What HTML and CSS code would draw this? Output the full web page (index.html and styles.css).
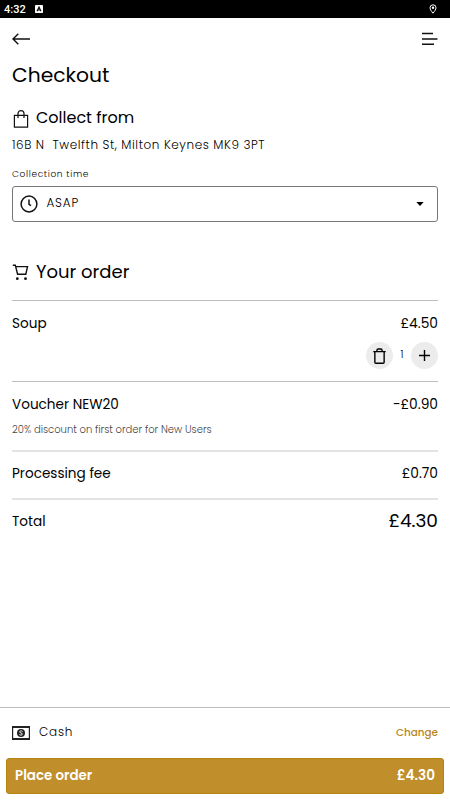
FILE: index.html
```html
<!DOCTYPE html>
<html lang="en">
<head>
<meta charset="utf-8">
<title>Checkout</title>
<link rel="stylesheet" href="styles.css">
</head>
<body>
<div class="statusbar">
  <span class="clock">4:32</span>
  <svg class="badge" width="8" height="8" viewBox="0 0 8 8"><rect width="8" height="8" rx=".7" fill="#fff"/><path d="M2 6.2 4 2 6 6.2M3 5h2" fill="none" stroke="#000" stroke-width="1.1"/></svg>
  <svg class="pin" width="8" height="10" viewBox="0 0 8 10" fill="none" stroke="#fff"><path d="M4 9.2C2.4 7.2 1 5.4 1 3.8a3 3 0 0 1 6 0C7 5.4 5.6 7.2 4 9.2Z"/><circle cx="4" cy="3.8" r="1.2" fill="#fff" stroke="none"/></svg>
</div>
<header class="nav">
  <svg width="18" height="12" viewBox="0 0 18 12" fill="none" stroke="#111" stroke-width="1.4"><path d="M18 6H1M6.3.8 1 6l5.3 5.2"/></svg>
  <svg width="16" height="14" viewBox="0 0 16 14" stroke="#111" stroke-width="1.5"><path d="M0 1.6h11M0 7h15.5M0 12.2h12"/></svg>
</header>
<main class="page">
  <h1 class="title">Checkout</h1>
  <h2 class="heading collect">
    <svg width="24" height="20" viewBox="0 0 24 20" fill="none" stroke="#111" stroke-width="1.2"><path d="M2.4 6.4h13.2v11.8H2.4zM6 9V4.6a3 3 0 0 1 6 0V9"/></svg>
    <span>Collect from</span>
  </h2>
  <p class="address">16B N&nbsp; Twelfth St, Milton Keynes MK9 3PT</p>
  <div class="label">Collection time</div>
  <div class="select">
    <svg width="18" height="18" viewBox="0 0 18 18" fill="none" stroke="#111" stroke-width="1.5"><circle cx="9" cy="9" r="7.9"/><path d="M9 4.4v4.9l2 1.3"/></svg>
    <span class="time">ASAP</span>
    <svg class="caret" width="8" height="4" viewBox="0 0 8 4"><path d="M.3 0h7.4L4 4z"/></svg>
  </div>
  <h2 class="heading order">
    <svg width="24" height="20" viewBox="0 0 24 20" fill="none" stroke="#111" stroke-width="1.4"><path d="M.8 3.2h2.5l2.3 9h8.2l1.7-7.6H3.8"/><circle cx="5.3" cy="16.7" r="1.4" fill="#111" stroke="none"/><circle cx="13.5" cy="16.7" r="1.4" fill="#111" stroke="none"/></svg>
    <span>Your order</span>
  </h2>
  <section class="item soup">
    <div class="row"><span>Soup</span><span class="price">£4.50</span></div>
    <div class="stepper">
      <span class="round"><svg width="13" height="18" viewBox="0 0 14 18" fill="none" stroke="#000" stroke-width="1.5"><path d="M.3 4.3h13.4M2 4.3v11.4q0 1.1 1.1 1.1h7.8q1.1 0 1.1-1.1V4.3M4.2 4.3V3q0-1.5 1.5-1.5h2.6Q9.8 1.5 9.8 3v1.3"/></svg></span>
      <span class="count">1</span>
      <span class="round"><svg width="11" height="11" viewBox="0 0 11 11" stroke="#000" stroke-width="1.4"><path d="M5.5 0v11M0 5.5h11"/></svg></span>
    </div>
  </section>
  <section class="item voucher">
    <div class="row"><span>Voucher NEW20</span><span class="price">-£0.90</span></div>
    <p class="note">20% discount on first order for New Users</p>
  </section>
  <section class="item fee"><div class="row"><span>Processing fee</span><span class="price">£0.70</span></div></section>
  <section class="item total"><div class="row"><span>Total</span><span class="sum">£4.30</span></div></section>
</main>
<footer class="footer">
  <div class="payment">
    <svg width="18" height="14" viewBox="0 0 18 14" fill="none" stroke="#222"><path d="M0 1h18M0 13h18" stroke-width="2"/><path d="M.6 1v12M17.4 1v12" stroke-width="1.2"/><circle cx="9" cy="7" r="4" fill="#222" stroke="none"/><path d="M10.6 5.5C9.8 4.5 7.5 4.7 7.6 6c.1 1.1 2.8.8 2.8 2 0 1.3-2.3 1.5-3.1.5" stroke="#fff" stroke-width=".9"/></svg>
    <span class="method">Cash</span>
    <a class="change">Change</a>
  </div>
  <div class="place"><span>Place order</span><span class="pay">£4.30</span></div>
</footer>
</body>
</html>
```
FILE: styles.css
```css
* { box-sizing: border-box; }
body { margin: 0; width: 450px; height: 800px; display: flex; flex-direction: column; background: #fff; color: #000; font-family: Poppins, Inter, sans-serif; font-size: 13.6px; overflow: hidden; }
h1, h2, p { margin: 0; font-weight: 400; white-space: nowrap; }
svg { display: block; flex: none; }
.statusbar { height: 18px; background: #000; color: #fff; display: flex; align-items: center; padding: 0 13px 0 4px; }
.clock { font: 500 11px Roboto, sans-serif; width: 31px; }
.pin { margin-left: auto; }
.nav { height: 42px; display: flex; align-items: center; justify-content: space-between; padding: 0 12px; }
.page { flex: 1; padding: 0 12px; }
.title { font-size: 20.3px; line-height: 30px; height: 30px; }
.heading { display: flex; align-items: center; height: 28px; font-size: 16px; }
.collect { margin-top: 13px; }
.collect svg { margin-top: 4px; }
.order svg { margin-top: 2px; }
.address { margin-top: 1px; font-size: 12px; line-height: 25px; font-weight: 300; letter-spacing: .59px; }
.label { margin-top: 9px; font-size: 9px; line-height: 17px; height: 20px; font-weight: 300; letter-spacing: .65px; }
.select { height: 36px; border: 1px solid #777; border-radius: 3px; display: flex; align-items: center; padding: 0 13px 0 7px; }
.time { font-size: 12px; margin: -2px 0 0 8.5px; font-weight: 300; letter-spacing: .8px; }
.caret { margin-left: auto; }
.order { margin-top: 35px; font-size: 18px; }
.row { display: flex; justify-content: space-between; align-items: center; height: 26px; line-height: 22px; }
.price { font-size: 13.8px; }
.item { border-top: 1px solid #bdbdbd; }
.soup { margin-top: 15px; height: 81px; padding-top: 10px; }
.stepper { display: flex; justify-content: flex-end; align-items: center; height: 27px; margin-top: 5px; }
.round { width: 27px; height: 27px; border-radius: 50%; background: #ececec; display: flex; align-items: center; justify-content: center; }
.count { width: 18px; text-align: center; font-size: 10px; font-weight: 300; margin-top: -1px; }
.voucher { height: 69px; padding-top: 10px; }
.note { font-size: 10px; line-height: 24px; color: #444; font-weight: 300; }
.fee { border-top: 2px solid #e3e3e3; height: 48px; padding-top: 9px; }
.total { border-top: 2px solid #e3e3e3; padding-top: 9px; }
.sum { font-size: 18.5px; margin-top: -2px; }
.footer { height: 93px; border-top: 1px solid #bdbdbd; padding: 0 6px 6px; }
.payment { height: 50px; display: flex; align-items: center; padding: 0 6px; }
.method { margin: -3px 0 0 9px; font-size: 12px; font-weight: 300; letter-spacing: .8px; }
.change { margin: 0 0 0 auto; color: #b9861c; font-size: 10.4px; font-weight: 500; }
.place { height: 36px; border: 1px solid #b88410; border-radius: 3px; background: #c08e2b; color: #fff; display: flex; align-items: center; justify-content: space-between; padding: 0 8px; font-size: 13.4px; line-height: 22px; font-weight: 600; }
.pay { font-size: 13.6px; }
```
